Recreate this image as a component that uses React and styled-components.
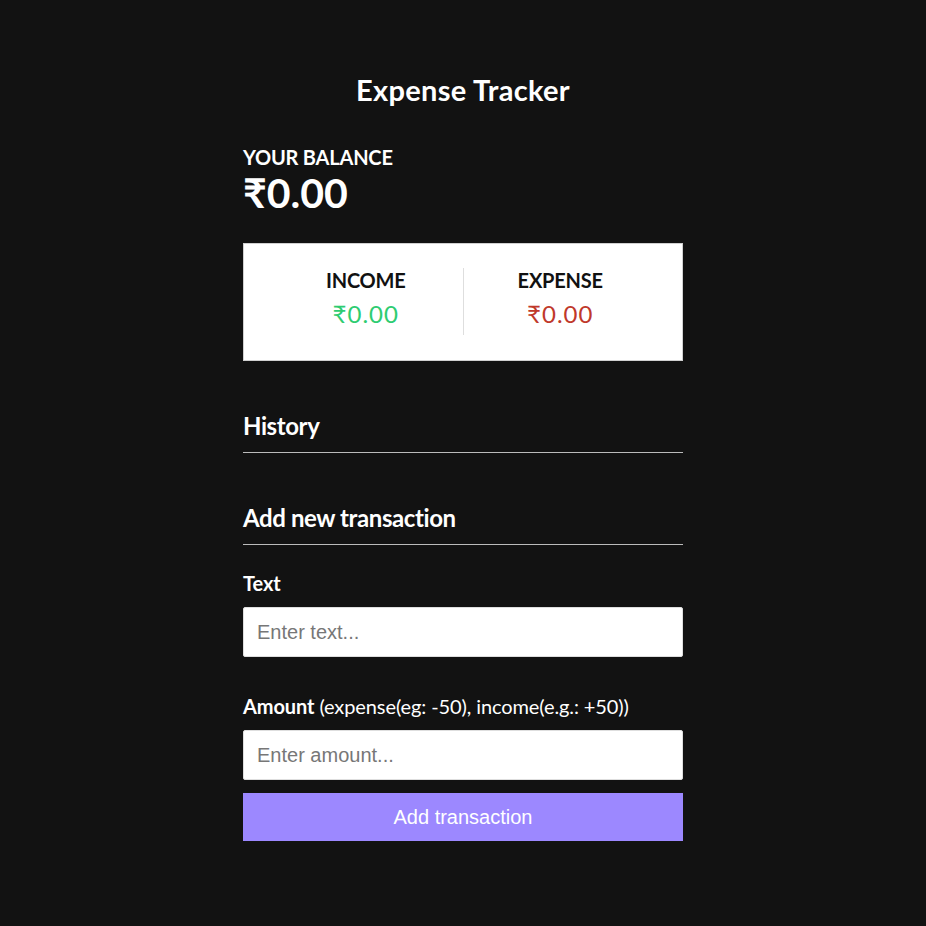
import React from 'react'
import styled, {createGlobalStyle} from 'styled-components'

const Global = createGlobalStyle`
	* { box-sizing: border-box; }
	body {
		margin: 0;
		background: #121212;
		color: #fff;
		font-family: 'Lato', 'Liberation Sans', sans-serif;
	}
`

export default function App(){
	return(
		<Page>
			<Global/>
			<Title>Expense Tracker</Title>
			<Container>
				<Caption>Your Balance</Caption>
				<Balance>₹0.00</Balance>
				<IncExp>
					<Side first>
						<Caption dark>Income</Caption>
						<Money plus>₹0.00</Money>
					</Side>
					<Side>
						<Caption dark>Expense</Caption>
						<Money>₹0.00</Money>
					</Side>
				</IncExp>
				<Heading>History</Heading>
				<Heading>Add new transaction</Heading>
				<form onSubmit={(e)=>e.preventDefault()}>
					<Label>Text</Label>
					<Input type="text" placeholder="Enter text..."/>
					<Label spaced><b>Amount</b> (expense(eg: -50), income(e.g.: +50))</Label>
					<Input type="number" placeholder="Enter amount..."/>
					<Button>Add transaction</Button>
				</form>
			</Container>
		</Page>)
}

const Page = styled.div`
	display:flex;
	flex-direction:column;
	align-items:center;
	padding-top:72px;
`
const Title = styled.h1`
	margin:0;
	font-size:29px;
	font-weight:700;
	letter-spacing:0.3px;
	line-height:36px;
`
const Container = styled.div`
	width:440px;
	margin-top:37px;
`
const Caption = styled.h4`
	margin:0;
	text-transform:uppercase;
	font-size:20px;
	font-weight:700;
	line-height:24px;
	letter-spacing:-0.2px;
	color:${(p)=>p.dark ? '#111' : '#fff'};
`
const Balance = styled.div`
	font-size:41px;
	font-weight:700;
	line-height:46px;
	margin-top:1px;
`
const IncExp = styled.div`
	background:#fff;
	border:1px solid #d0d0d0;
	display:flex;
	padding:24px 25px 25px;
	margin-top:27px;
`
const Side = styled.div`
	flex:1;
	text-align:center;
	border-right:${(p)=>p.first ? '1px solid #dedede' : 'none'};
`
const Money = styled.div`
	font-size:24px;
	letter-spacing:1px;
	line-height:30px;
	margin:7px 0 6px;
	color:${(p)=>p.plus ? '#2ecc71' : '#c0392b'};
`
const Heading = styled.h3`
	margin:51px 0 0;
	font-size:24px;
	font-weight:700;
	letter-spacing:-0.4px;
	line-height:28px;
	padding-bottom:12px;
	border-bottom:1px solid #bbb;
`
const Label = styled.label`
	display:block;
	margin:${(p)=>p.spaced ? '37px 0 12px' : '26px 0 12px'};
	font-size:20px;
	line-height:24px;
	letter-spacing:-0.1px;
	font-weight:${(p)=>p.spaced ? 400 : 700};
	b{ font-weight:700; }
`
const Input = styled.input`
	display:block;
	width:100%;
	height:50px;
	border:1px solid #dedede;
	border-radius:2px;
	padding:0 13px;
	font-family:'Liberation Sans', Arial, sans-serif;
	font-size:20px;
	color:#333;
	outline:none;
	&::placeholder{ color:#777; }
	&::-webkit-inner-spin-button{ display:none; }
`
const Button = styled.button`
	display:block;
	width:100%;
	height:48px;
	margin-top:13px;
	border:0;
	background:#9c88ff;
	color:#fff;
	font-family:'Liberation Sans', Arial, sans-serif;
	font-size:20px;
	cursor:pointer;
`
